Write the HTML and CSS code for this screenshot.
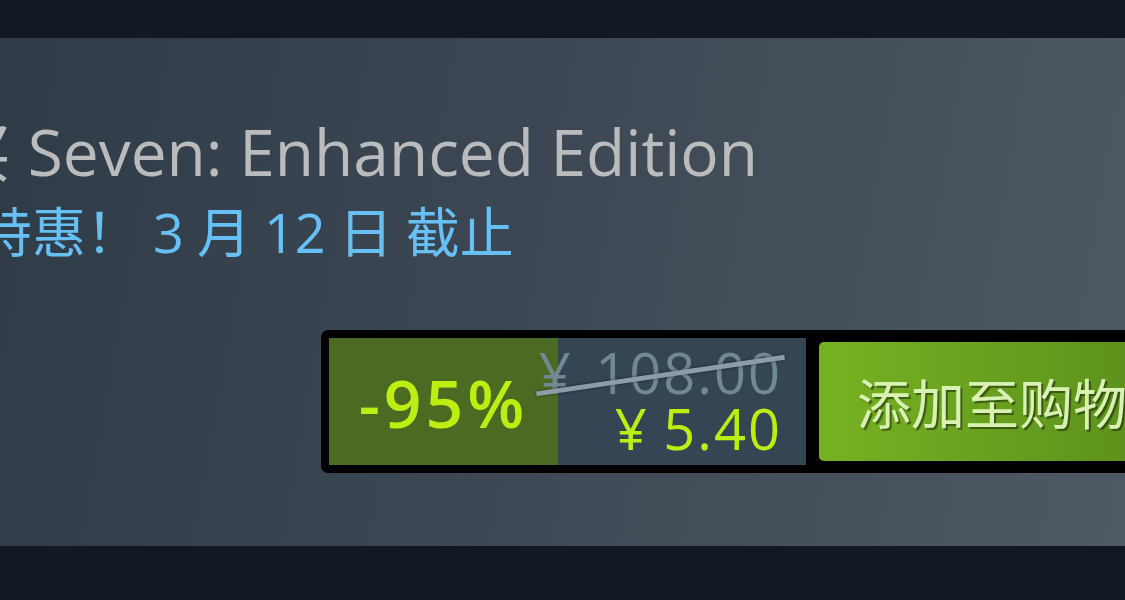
FILE: index.html
```html
<!DOCTYPE html>
<html lang="zh-CN">
<head>
<meta charset="utf-8">
<link rel="stylesheet" href="styles.css">
</head>
<body>
<div class="topbar"></div>
<section class="purchase">
  <h1 class="title"><span class="clip">购买</span> Seven: Enhanced Edition</h1>
  <p class="deal"><span class="clip-deal">限时</span>特惠！ 3 月 12 日 截止</p>
  <div class="buybox">
    <div class="discount">-95%</div>
    <div class="prices">
      <div class="orig">¥ 108.00</div>
      <div class="final">¥ 5.40</div>
    </div>
    <div class="cartbtn">添加至购物车</div>
  </div>
</section>
<div class="bottombar"></div>
</body>
</html>
```

FILE: styles.css
```css
html, body {
  margin: 0;
  padding: 0;
  width: 1125px;
  height: 600px;
  overflow: hidden;
  background: #121824;
  font-family: "Open Sans", "Noto Sans CJK SC", sans-serif;
}

.topbar {
  height: 38px;
  background: #121824;
}

.purchase {
  height: 508px;
  box-sizing: border-box;
  padding-top: 82px;
  background: linear-gradient(100deg, #2f3c47 0%, #3c4753 45%, #4f5963 100%);
  overflow: hidden;
}

.title {
  margin: 0 0 0 -117px;
  font-weight: 400;
  font-size: 64px;
  line-height: 64px;
  color: #b9bbbd;
  white-space: nowrap;
}

.deal {
  margin: 21px 0 0 -130px;
  font-size: 54px;
  line-height: 54px;
  color: #66c0f4;
  white-space: nowrap;
  word-spacing: -1px;
  font-family: "Open Sans", "Noto Sans CJK SC", sans-serif;
}

.buybox {
  margin: 71px 0 0 321px;
  display: flex;
  align-items: stretch;
  background: #000;
  border-radius: 7px;
  padding: 8px;
  width: 900px;
  height: 127px;
}

.discount {
  width: 229px;
  background: #4c6b22;
  color: #beee11;
  font-weight: 600;
  font-size: 66px;
  letter-spacing: 4px;
  display: flex;
  align-items: center;
  justify-content: center;
  padding: 0 0 0 0;
  box-sizing: border-box;
}

.prices {
  width: 248px;
  background: #344654;
  display: flex;
  flex-direction: column;
  align-items: flex-end;
  justify-content: center;
  padding-right: 24px;
  box-sizing: border-box;
  position: relative;
}

.orig {
  position: relative;
  color: #738895;
  font-size: 56px;
  line-height: 52px;
  letter-spacing: 2px;
  word-spacing: 6px;
  white-space: nowrap;
}

.orig::before {
  content: "";
  position: absolute;
  left: -4px;
  right: -4px;
  top: 27px;
  height: 5px;
  background: #8d9ca6;
  transform: rotate(-8.4deg);
  box-shadow: 0 0 3px rgba(0,0,0,0.6);
}

.final {
  color: #beee11;
  font-size: 56px;
  line-height: 60px;
  letter-spacing: 2px;
  word-spacing: -2px;
  white-space: nowrap;
}

.cartbtn {
  margin: 4px 0 4px 13px;
  flex: 0 0 auto;
  padding: 0 40px 0 38px;
  border-radius: 5px;
  background: linear-gradient(to right, #75b022 5%, #588a1b 95%);
  color: #d9f2b4;
  font-family: "Noto Sans CJK SC", sans-serif;
  font-size: 54px;
  display: flex;
  align-items: center;
  text-shadow: 2px 2px 1px rgba(0,0,0,0.45);
  white-space: nowrap;
}

.bottombar {
  height: 54px;
  background: #121824;
}
```
